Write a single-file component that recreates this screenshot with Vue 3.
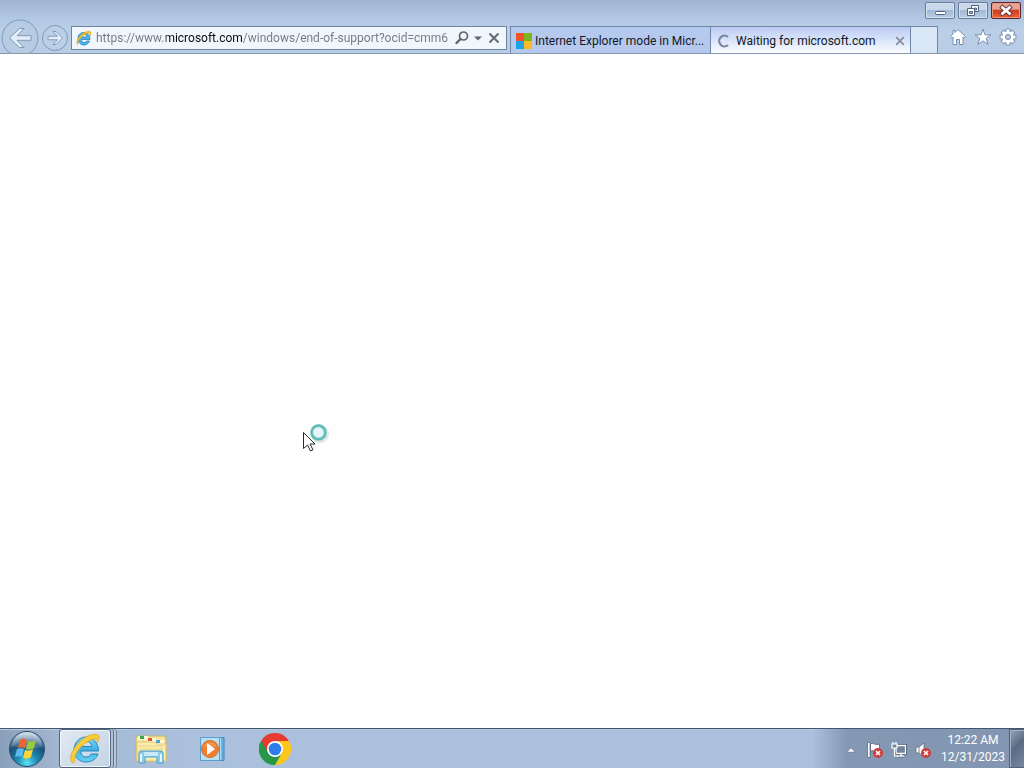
<script setup>
import { ref } from 'vue'

const address = ref('https://www.microsoft.com/windows/end-of-support?ocid=cmm6')
const teeth = [0, 45, 90, 135, 180, 225, 270, 315]
</script>

<template>
  <div class="desktop">
    <header class="frame">
      <div class="captions">
        <button class="caption" aria-label="Minimize">
          <svg width="28" height="15" viewBox="0 0 28 15"><rect x="9.500" y="8.500" width="10" height="3" rx="1" fill="#fff" stroke="#52617c" /></svg>
        </button>
        <button class="caption" aria-label="Restore">
          <svg width="28" height="15" viewBox="0 0 28 15">
            <path d="M12.500 2.500h7v6h-7z" fill="#fff" stroke="#52617c" /><path d="M15.500 5h2v2h-2z" fill="#a9bcd6" stroke="#52617c" />
            <path d="M8.500 5.500h7v7h-7z" fill="#fff" stroke="#52617c" /><path d="M10.500 8.500h3v2h-3z" fill="#a9bcd6" stroke="#52617c" />
          </svg>
        </button>
        <button class="caption close" aria-label="Close">
          <svg width="28" height="15" viewBox="0 0 28 15"><path d="M10.500 4.500l7 6M17.500 4.500l-7 6" stroke="#5d3437" stroke-width="4.500" stroke-linecap="square" /><path d="M10.500 4.500l7 6M17.500 4.500l-7 6" stroke="#fff" stroke-width="2.700" stroke-linecap="square" /></svg>
        </button>
      </div>

      <div class="toolbar">
        <nav class="travel">
          <button class="back" aria-label="Back">
            <svg width="38" height="38" viewBox="0 0 38 38">
              <circle cx="19" cy="19" r="18" fill="#b7cbe3" stroke="#7d9abb" />
              <path d="M8.500 19l10-9.500h4.500l-7 7.200h14v4.600H16l7 7.200h-4.500z" fill="#e4eefa" stroke="#8199b8" stroke-linejoin="round" />
            </svg>
          </button>
          <button class="forward" aria-label="Forward">
            <svg width="28" height="28" viewBox="0 0 28 28">
              <circle cx="14" cy="14" r="12.500" fill="#bbcfe6" stroke="#7d9abb" />
              <path d="M21.500 14l-6.500-6.500h-3l4.500 4.700H7v3.600h9.500L12 20.500h3z" fill="#e4eefa" stroke="#8199b8" stroke-linejoin="round" />
            </svg>
          </button>
        </nav>

        <div class="address">
          <svg class="favicon" width="16" height="16" viewBox="0 0 32 32">
            <path d="M27 22c-2 5-6 8-11 8C9 30 4 25 4 17S9 5 16 5c8 0 12 6 12 14H11c0 4 2 6 5 6 2 0 4-1 5-3zM11 14h11c0-3-2-5-5-5s-6 2-6 5z" fill="#4eb5ea" stroke="#237bb8" stroke-width="1.500" />
            <path d="M3 29C-2 24 8 8 19 4c6-3 11-2 11 2 0 2-1 4-2 6 1-5-1-7-6-5C13 10 3 20 3 29z" fill="#f5c629" stroke="#c99c1b" />
          </svg>
          <input v-model="address" class="url" type="text" aria-label="Address" spellcheck="false">
          <button class="tool" aria-label="Search">
            <svg width="14" height="14" viewBox="0 0 14 14"><circle cx="8.500" cy="5" r="4" fill="none" stroke="#5f656e" stroke-width="1.700" /><path d="M5.500 8L1.500 12" stroke="#5f656e" stroke-width="2.400" stroke-linecap="round" /></svg>
          </button>
          <button class="tool drop" aria-label="Show address list">
            <svg width="8" height="5" viewBox="0 0 8 5"><path d="M0 .5h8L4 4.500z" fill="#5f656e" /></svg>
          </button>
          <button class="tool" aria-label="Stop">
            <svg width="12" height="12" viewBox="0 0 12 12"><path d="M1.500 1.500l9 9M10.500 1.500l-9 9" stroke="#656b75" stroke-width="2" /></svg>
          </button>
        </div>

        <div class="tabs" role="tablist">
          <div class="tab" role="tab" aria-selected="false">
            <svg width="16" height="16" viewBox="0 0 16 16"><path d="M0 0h8v8H0z" fill="#f05328" /><path d="M8 0h8v8H8z" fill="#7cb51c" /><path d="M0 8h8v8H0z" fill="#1ca4e8" /><path d="M8 8h8v8H8z" fill="#fdb924" /></svg>
            <span class="title">Internet Explorer mode in Micr...</span>
          </div>
          <div class="tab active" role="tab" aria-selected="true">
            <svg width="16" height="16" viewBox="0 0 16 16"><path d="M12 4A5.300 5.300 0 1 0 12 12" fill="none" stroke="#7c85a0" stroke-width="2.200" /></svg>
            <span class="title">Waiting for microsoft.com</span>
            <button class="tab-close" aria-label="Close tab">
              <svg width="10" height="10" viewBox="0 0 10 10"><path d="M1.200 1.200l7.600 7.600M8.800 1.200L1.200 8.800" stroke="#858da0" stroke-width="1.700" /></svg>
            </button>
          </div>
          <button class="new-tab" aria-label="New tab"></button>
        </div>

        <div class="commands">
          <button class="command" aria-label="Home">
            <svg width="18" height="18" viewBox="0 0 18 18"><path d="M9 1.500l7.500 7-1 1.500-1.500-1v7.500h-3.500v-5h-3v5H4V9l-1.500 1-1-1.500L4 6V2.500h2v2z" fill="#fff" stroke="#7890b0" stroke-linejoin="round" /></svg>
          </button>
          <button class="command" aria-label="Favorites">
            <svg width="18" height="18" viewBox="0 0 18 18"><path d="M9 1l2 5.800h6l-4.800 3.600 1.900 6L9 12.900l-5.100 3.500 1.900-6L1 6.800h6z" fill="#fff" stroke="#7890b0" stroke-linejoin="round" /></svg>
          </button>
          <button class="command" aria-label="Tools">
            <svg width="18" height="18" viewBox="0 0 18 18">
              <g stroke="#7890b0" stroke-width="1.800" fill="#fff"><rect v-for="t in teeth" :key="t" x="7.600" y="1.500" width="2.800" height="5" :transform="`rotate(${t} 9 9)`" /></g>
              <g fill="#fff"><rect v-for="t in teeth" :key="t" x="7.600" y="1.500" width="2.800" height="5" :transform="`rotate(${t} 9 9)`" /></g>
              <circle cx="9" cy="9" r="4.500" fill="none" stroke="#fff" stroke-width="2.500" /><circle cx="9" cy="9" r="2.500" fill="#b9cee6" stroke="#7890b0" />
            </svg>
          </button>
        </div>
      </div>
    </header>

    <main class="page">
      <svg class="pointer" width="30" height="32" viewBox="0 0 30 32">
        <defs><radialGradient id="ring"><stop offset=".5" stop-color="#eef9f8" /><stop offset=".66" stop-color="#7fcfc6" /><stop offset=".82" stop-color="#4fb3ad" /><stop offset="1" stop-color="#9fd9ce" /></radialGradient></defs>
        <circle cx="18" cy="13" r="9" fill="#c4cccc" opacity=".5" />
        <circle cx="16.500" cy="11.500" r="8.500" fill="url(#ring)" /><circle cx="16" cy="11" r="4.500" fill="#e8f4f8" />
        <path d="M1.500 11.500v16l4-3.500 3 6 2.500-1.200-3-5.800h5z" fill="#fff" stroke="#252b2b" />
      </svg>
    </main>

    <footer class="taskbar">
      <button class="start" aria-label="Start">
        <svg width="38" height="38" viewBox="0 0 38 38">
          <defs>
            <radialGradient id="orb" cx=".5" cy=".9" r=".85"><stop offset="0" stop-color="#5ee4f5" /><stop offset=".35" stop-color="#1c87b2" /><stop offset=".7" stop-color="#1b4e78" /><stop offset="1" stop-color="#8da9c3" /></radialGradient>
            <linearGradient id="gloss" x2="0" y2="1"><stop offset="0" stop-color="#fff" stop-opacity=".6" /><stop offset="1" stop-color="#fff" stop-opacity=".1" /></linearGradient>
          </defs>
          <circle cx="19" cy="19" r="17.500" fill="url(#orb)" stroke="#294c6c" />
          <path d="M4 17a15 15 0 0 1 30 0C25 21 14 16 4 17z" fill="url(#gloss)" />
          <path d="M12 10c3-2 5-1 7 0l-2 8c-3-1-5-1-7 0z" fill="#ef652c" /><path d="M20 11c3 1 5 1 8-1l-2 8c-3 2-5 2-8 1z" fill="#9bcb3d" />
          <path d="M9 19c3-1 5-1 7 0l-2 8c-2-1-4-1-7 0z" fill="#5cb8ee" /><path d="M17 20c3 1 5 1 8-1l-2 8c-3 2-5 2-8 1z" fill="#ffd536" />
        </svg>
      </button>
      <div class="apps">
        <button class="app running" aria-label="Internet Explorer">
          <svg width="32" height="32" viewBox="0 0 32 32">
            <defs><linearGradient id="ie" x2="0" y2="1"><stop offset="0" stop-color="#80dcf8" /><stop offset=".5" stop-color="#3faee5" /><stop offset="1" stop-color="#69d4f4" /></linearGradient></defs>
            <path d="M29 21c-2 5-6 8-12 8C10 29 5 24 5 17S10 4 17 4s12.500 6 12.500 14H12c0 4 2 6 5 6 3 0 4-1 5-3zM12 13.500h10.500c0-3-2-5-5-5s-5.500 2-5.500 5z" fill="url(#ie)" stroke="#2786be" />
            <path d="M3 29.500C-2 23 8 8 19 3c7-3 12-2 11 2 0 2-1 3-2 5 1-4-1-5-6-3C13 11 5 20 6 27c0 2-2 3.500-3 2.500z" fill="#f8cc35" stroke="#d9a427" stroke-width=".7" />
          </svg>
        </button>
        <button class="app" aria-label="Windows Explorer">
          <svg width="32" height="32" viewBox="0 0 32 32">
            <path d="M1 5q0-2 2-2h26q2 0 2 2v23H1z" fill="#f7e39b" stroke="#c9b25e" /><path d="M3 3h10v4H3zM12 5h9v4h-9zM20 7h9v4h-9z" fill="#fff8dc" /><path d="M5 3h4v3H5z" fill="#36aa45" /><path d="M13 5h4v3h-4z" fill="#dc5736" /><path d="M21 7h4v3h-4z" fill="#4ba7d7" />
            <path d="M2 9h18l2 2h9v17H2z" fill="#fbedac" stroke="#dfc875" /><path d="M4 13h24M4 16h24" stroke="#e9d385" />
            <path d="M4 30V20q0-2 2-2h20q2 0 2 2v10h-6v-6H10v6z" fill="#8bcbea" stroke="#4e9fce" /><path d="M9 19h14v4H9z" fill="#c8eaf7" /><path d="M6 21v8M26 21v8" stroke="#e4f8ff" stroke-width="2" />
          </svg>
        </button>
        <button class="app" aria-label="Windows Media Player">
          <svg width="32" height="32" viewBox="0 0 32 32">
            <path d="M8 4.500h19v23H8z" fill="#78bce4" stroke="#3c85b8" /><path d="M5 4.500h20v23H5z" fill="#a9daf3" stroke="#4c99c8" /><path d="M3.500 4.500h19v23h-19z" fill="#b9dff5" stroke="#599fcb" />
            <circle cx="13" cy="16" r="8.500" fill="#ef7f2d" stroke="#db6b36" /><path d="M6 14a7.500 7.500 0 0 1 14 0z" fill="#f5a45f" opacity=".6" /><path d="M10 10l8 6-8 6z" fill="#fff" />
          </svg>
        </button>
        <button class="app" aria-label="Google Chrome">
          <svg width="32" height="32" viewBox="0 0 32 32">
            <path d="M16 16L2.140 8A16 16 0 0 1 29.860 8z" fill="#e63b30" /><path d="M16 16L16 32A16 16 0 0 1 2.140 8z" fill="#279748" /><path d="M16 16L29.860 8A16 16 0 0 1 16 32z" fill="#fdc61b" />
            <path d="M16 8h13.860L22.930 20z" fill="#fdc61b" /><path d="M9.070 20L2.140 8 16 8z" fill="#e63b30" /><path d="M2.140 8l6.930 12L16 24l6.930-4L16 32A16 16 0 0 1 2.140 8z" fill="#279748" />
            <circle cx="16" cy="16" r="8" fill="#fff" /><circle cx="16" cy="16" r="6.300" fill="#2f7bea" />
          </svg>
        </button>
      </div>
      <div class="tray">
        <button class="status more" aria-label="Show hidden icons"><svg width="10" height="6" viewBox="0 0 10 6"><path d="M1 5l4-4 4 4z" fill="#fff" stroke="#62758f" stroke-width=".5" /></svg></button>
        <button class="status" aria-label="Action Center">
          <svg width="16" height="16" viewBox="0 0 16 16"><path d="M.5.500h2.500v15H.5zM3.500 2c3-2 4 2 9 0v7c-4 2-5-1-9 0z" fill="#fff" stroke="#4e5b6e" stroke-width=".7" /><circle cx="11" cy="11" r="5" fill="#cf3c3c" /><path d="M9 9l4 4M13 9l-4 4" stroke="#fff" stroke-width="1.700" /></svg>
        </button>
        <button class="status" aria-label="Network">
          <svg width="16" height="16" viewBox="0 0 16 16"><path d="M5 3.500h9.500v8H5zM7 14h6M10 12v2" fill="#687c98" stroke="#354456" stroke-width="2.700" /><path d="M5 3.500h9.500v8H5zM6 14h7M10 12v2" fill="#71839e" stroke="#fff" stroke-width="1.300" /><path d="M1 2h5v4H1zM2 0v2M5 0v2M3.500 6v8H6" fill="#71839e" stroke="#fff" stroke-width="1.200" /></svg>
        </button>
        <button class="status" aria-label="Volume muted">
          <svg width="16" height="16" viewBox="0 0 16 16"><path d="M1 5h3l5-4v14l-5-4H1z" fill="#fff" stroke="#4e5b6e" stroke-width=".7" /><path d="M4 5v6" stroke="#77869b" /><circle cx="11" cy="11" r="5" fill="#cf3c3c" /><path d="M9 9l4 4M13 9l-4 4" stroke="#fff" stroke-width="1.700" /></svg>
        </button>
        <div class="clock"><time>12:22 AM</time><time>12/31/2023</time></div>
        <button class="show-desktop" aria-label="Show desktop"></button>
      </div>
    </footer>
  </div>
</template>

<style>
body { margin: 0; }
</style>

<style scoped>
* { box-sizing: border-box; }
.desktop { height: 100vh; display: flex; flex-direction: column; font-family: Roboto, "Open Sans", sans-serif; font-size: 12px; color: #111827; }
button { display: flex; align-items: center; justify-content: center; padding: 0; border: 0; background: none; }
svg { display: block; flex: none; fill: none; }
.frame { flex: none; background: linear-gradient(#a2b4d2, #b2c8e2 18px, #bbd0e8 32px, #b8cde5); border-bottom: 1px solid #8698b0; overflow: hidden; }
.captions { display: flex; justify-content: flex-end; gap: 3px; padding: 2px 3px 0 0; height: 19px; }
.caption { width: 30px; height: 17px; border: 1px solid #687d9b; border-radius: 2px; background: linear-gradient(#c8d7e9 0 45%, #a2b7d2 46%, #b8cee5); box-shadow: inset 0 0 0 1px #d5e2f0; }
.caption.close { border-color: #5b2430; background: linear-gradient(#e6a496 0 42%, #cb3a20 46%, #ed642e); box-shadow: inset 0 0 0 1px #e99a7d; }
.toolbar { height: 34px; display: flex; align-items: flex-end; }
.travel { display: flex; align-items: flex-start; gap: 2px; width: 71px; height: 34px; padding-left: 1px; }
.forward { margin-top: 5px; }
.address { flex: 1; min-width: 0; display: flex; align-items: center; height: 24px; margin: 0 3px 3px 0; padding: 0 4px; border: 1px solid #6d839f; background: #f1f6fd; }
.favicon { margin-right: 4px; }
.url { flex: 1; min-width: 0; width: 0; height: 22px; margin-right: 2px; padding: 0; border: 0; outline: 0; font: inherit; color: transparent; background: linear-gradient(90deg, #737982 70px, #080b10 70px 147px, #737982 147px); background-clip: text; }
.tool { width: 16px; height: 22px; margin-left: 1px; }
.tool.drop { width: 14px; }
.tabs { display: flex; height: 27px; border: 1px solid #7187a8; border-bottom: 0; }
.tab { display: flex; align-items: center; width: 200px; padding: 1px 5px 0; gap: 3px; background: #b5c8ed; border-right: 1px solid #7187a8; white-space: nowrap; }
.tab.active { background: linear-gradient(#bccaf4, #d9e4fa 50%, #fafcff); }
.title { flex: 1; min-width: 0; }
.active .title { padding-left: 1px; }
.tab-close { width: 10px; height: 16px; }
.new-tab { width: 26px; background: #d9e6f5; }
.commands { display: flex; align-items: center; gap: 7px; height: 34px; padding: 2px 7px 0 11px; }
.command { width: 18px; height: 18px; }
.page { flex: 1; background: #fefefe; position: relative; }
.pointer { position: absolute; left: 302px; top: 367px; }
.taskbar { flex: none; display: flex; height: 40px; border-top: 1px solid #42576f; background: linear-gradient(90deg, #8a9fb9, #a3b7d2 60px, #aac0dc 180px); box-shadow: inset 0 1px #b9cade; }
.start { width: 59px; height: 39px; padding-right: 5px; }
.apps { flex: 1; display: flex; }
.app { width: 62px; height: 39px; }
.app.running { width: 52px; margin-right: 9px; border: 1px solid #50647e; border-radius: 3px; background: linear-gradient(135deg, #e2e9f1, #c4d3e4); box-shadow: inset 0 0 0 1px #eff5fb, 2px 0 #b3c3d6, 3px 0 #5c708b, 5px 0 #b8c8da, 6px 0 #73869e; }
.tray { display: flex; align-items: center; padding-left: 26px; color: #fff; background: linear-gradient(90deg, #aac0dc00, #8598b3 34px, #8296b1); }
.status { width: 24px; height: 39px; padding-top: 2px; }
.clock { display: flex; flex-direction: column; width: 74px; padding: 1px 0 0 2px; text-align: center; line-height: 17px; }
.show-desktop { width: 15px; height: 39px; border: 1px solid #52647b; border-right: 0; background: linear-gradient(135deg, #97a8bd, #596b83 45%, #7488a1); box-shadow: inset 1px 1px #a3b1c3; }
</style>
